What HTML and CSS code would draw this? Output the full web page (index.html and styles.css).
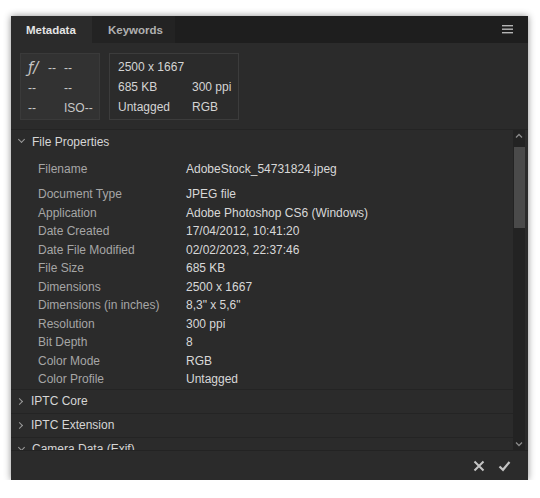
FILE: index.html
```html
<!DOCTYPE html>
<html>
<head>
<meta charset="utf-8">
<link rel="stylesheet" href="styles.css">
</head>
<body>
<div class="panel">
  <div class="tabbar">
    <div class="tab active">Metadata</div>
    <div class="tab">Keywords</div>
    <div class="spacer"></div>
    <svg class="menu" width="11" height="9" viewBox="0 0 11 9"><rect x="0" y="0" width="11" height="1.4" fill="#b5b5b5"/><rect x="0" y="3.5" width="11" height="1.4" fill="#b5b5b5"/><rect x="0" y="7" width="11" height="1.4" fill="#b5b5b5"/></svg>
  </div>
  <div class="summary">
    <div class="camera-box">
      <div class="cgrid">
        <span class="fnum">ƒ/</span><span>--</span><span>--</span>
        <span>--</span><span></span><span>--</span>
        <span>--</span><span></span><span>ISO--</span>
      </div>
    </div>
    <div class="file-box">
      <span class="span2">2500 x 1667</span>
      <span>685 KB</span><span>300 ppi</span>
      <span>Untagged</span><span>RGB</span>
    </div>
  </div>
  <div class="content">
    <div class="scroll">
      <div class="section open">
        <div class="shead"><span class="chev down"></span>File Properties</div>
        <div class="rows">
          <div class="row first"><span class="lbl">Filename</span><span class="val">AdobeStock_54731824.jpeg</span></div>
          <div class="row"><span class="lbl">Document Type</span><span class="val">JPEG file</span></div>
          <div class="row"><span class="lbl">Application</span><span class="val">Adobe Photoshop CS6 (Windows)</span></div>
          <div class="row"><span class="lbl">Date Created</span><span class="val">17/04/2012, 10:41:20</span></div>
          <div class="row"><span class="lbl">Date File Modified</span><span class="val">02/02/2023, 22:37:46</span></div>
          <div class="row"><span class="lbl">File Size</span><span class="val">685 KB</span></div>
          <div class="row"><span class="lbl">Dimensions</span><span class="val">2500 x 1667</span></div>
          <div class="row"><span class="lbl">Dimensions (in inches)</span><span class="val">8,3" x 5,6"</span></div>
          <div class="row"><span class="lbl">Resolution</span><span class="val">300 ppi</span></div>
          <div class="row"><span class="lbl">Bit Depth</span><span class="val">8</span></div>
          <div class="row"><span class="lbl">Color Mode</span><span class="val">RGB</span></div>
          <div class="row"><span class="lbl">Color Profile</span><span class="val">Untagged</span></div>
        </div>
      </div>
      <div class="section"><div class="shead"><span class="chev right"></span>IPTC Core</div></div>
      <div class="section"><div class="shead"><span class="chev right"></span>IPTC Extension</div></div>
      <div class="section"><div class="shead"><span class="chev down"></span>Camera Data (Exif)</div></div>
    </div>
    <div class="scrollbar">
      <svg class="arrow" width="12" height="12" viewBox="0 0 12 12"><path d="M3 7.5 L6 4.5 L9 7.5" fill="none" stroke="#8a8a8a" stroke-width="1.3"/></svg>
      <div class="thumb"></div>
      <div class="track"></div>
      <svg class="arrow" width="12" height="12" viewBox="0 0 12 12"><path d="M3 4.5 L6 7.5 L9 4.5" fill="none" stroke="#8a8a8a" stroke-width="1.3"/></svg>
    </div>
  </div>
  <div class="footer">
    <svg width="12" height="12" viewBox="0 0 12 12"><path d="M1.5 1.5 L10.5 10.5 M10.5 1.5 L1.5 10.5" stroke="#c4c4c4" stroke-width="2"/></svg>
    <svg width="13" height="12" viewBox="0 0 13 12"><path d="M1.5 6.5 L5 9.8 L11.5 2" fill="none" stroke="#c4c4c4" stroke-width="2.2"/></svg>
  </div>
</div>
</body>
</html>
```
FILE: styles.css
```css
html, body {
  margin: 0;
  padding: 0;
  background: #ffffff;
}
body {
  font-family: "Liberation Sans", Arial, sans-serif;
  font-size: 12px;
  padding: 16px 0 0 11px;
}
.panel {
  width: 517px;
  height: 464px;
  background: #2b2b2b;
  box-shadow: 0 0 7px rgba(0,0,0,0.45);
  display: flex;
  flex-direction: column;
}
.tabbar {
  height: 27px;
  background: #1e1e1e;
  display: flex;
  align-items: stretch;
  flex-shrink: 0;
}
.tab {
  color: #b0b0b0;
  font-weight: bold;
  font-size: 11.5px;
  display: flex;
  align-items: center;
  padding: 1px 0 0 16px;
  width: 67px;
  background: #232323;
}
.tab.active {
  background: #2b2b2b;
  color: #e4e4e4;
  width: 66px;
  padding-left: 15px;
}
.spacer { flex: 1; }
.menu {
  align-self: center;
  margin-right: 15px;
}
.summary {
  display: flex;
  gap: 9px;
  padding: 10px 0 0 9px;
  height: 87px;
  box-sizing: border-box;
  border-bottom: 1px solid #242424;
  flex-shrink: 0;
}
.camera-box {
  width: 80px;
  height: 67px;
  box-sizing: border-box;
  background: #323232;
  border: 1px solid #3a3a3a;
  padding: 4px 0 0 7px;
  color: #c8c8c8;
}
.cgrid {
  display: grid;
  grid-template-columns: 20px 16px 30px;
  grid-auto-rows: 20px;
  align-items: center;
}
.fnum {
  font-family: "DejaVu Sans", sans-serif;
  font-style: italic;
  font-size: 15px;
  letter-spacing: 0;
  color: #c4c4c4;
}
.file-box {
  width: 130px;
  height: 67px;
  box-sizing: border-box;
  border: 1px solid #3c3c3c;
  padding: 3px 0 0 8px;
  display: grid;
  grid-template-columns: 74px 50px;
  grid-auto-rows: 20px;
  align-items: center;
  color: #d4d4d4;
}
.span2 { grid-column: span 2; }
.content {
  flex: 1;
  display: flex;
  min-height: 0;
  overflow: hidden;
}
.scroll {
  flex: 1;
  overflow: hidden;
}
.shead {
  height: 23px;
  display: flex;
  align-items: center;
  color: #d6d6d6;
  padding-left: 7px;
}
.section { border-bottom: 1px solid #242424; }
.section:last-child { border-bottom: none; }
.chev {
  width: 4px;
  height: 4px;
  border-right: 1px solid #9a9a9a;
  border-bottom: 1px solid #9a9a9a;
  margin-right: 8px;
}
.chev.down { transform: translateY(-2px) rotate(45deg); margin-left: 1px; }
.chev.right { transform: rotate(-45deg); margin-left: -1px; margin-right: 9px; }
.rows { padding: 7px 0 0 27px; }
.row {
  height: 18.5px;
  display: flex;
  align-items: center;
}
.row.first { margin-bottom: 6.5px; }
.lbl { width: 148px; color: #a6a6a6; }
.val { color: #d8d8d8; }
.scrollbar {
  width: 12px;
  margin-right: 3px;
  background: #232323;
  display: flex;
  flex-direction: column;
  align-items: center;
}
.arrow { flex-shrink: 0; }
.thumb {
  width: 11px;
  height: 81px;
  background: #4a4a4a;
  margin-top: 5px;
  flex-shrink: 0;
}
.track { flex: 1; }
.footer {
  height: 30px;
  flex-shrink: 0;
  border-top: 1px solid #232323;
  display: flex;
  justify-content: flex-end;
  align-items: center;
  gap: 13px;
  padding-right: 17px;
  box-sizing: border-box;
}
```
